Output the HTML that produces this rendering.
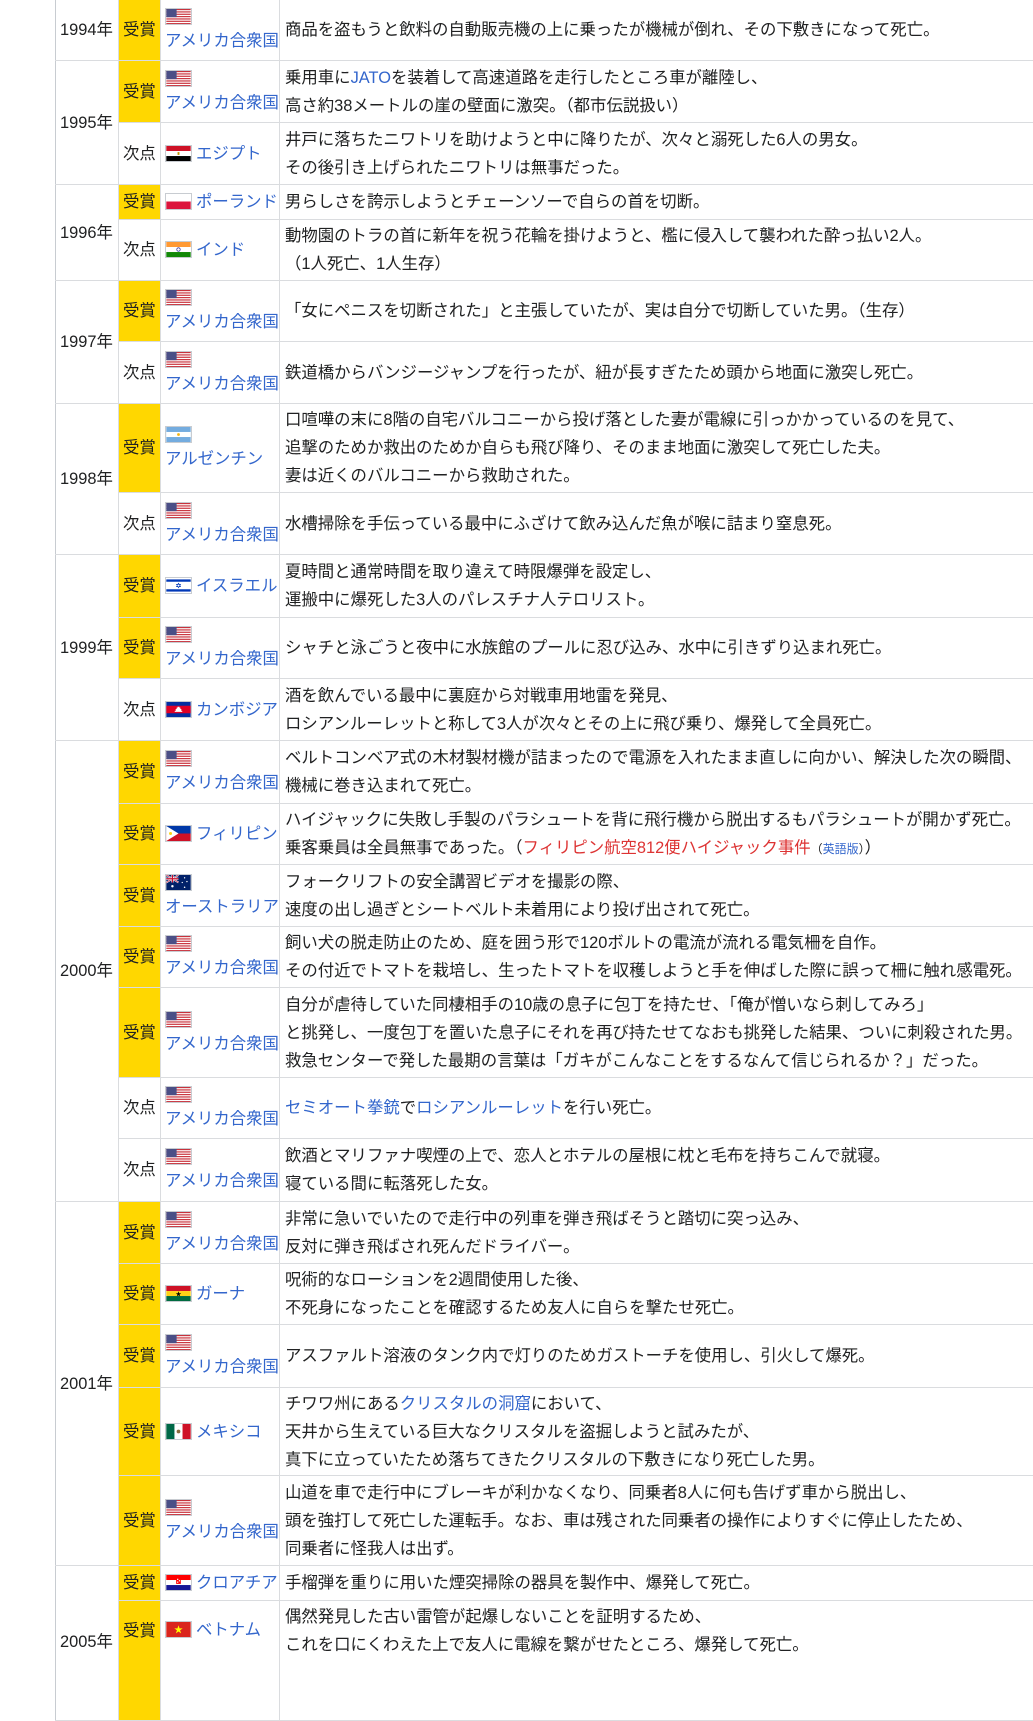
<!DOCTYPE html>
<html><head><meta charset="utf-8">
<style>
html,body{margin:0;padding:0;background:#fff;width:1033px;height:1656px;overflow:hidden}
body{font-family:"Liberation Sans","Noto Sans CJK JP",sans-serif;font-size:16.4px;color:#202122}
table{position:absolute;left:55px;top:-1px;border-collapse:collapse;table-layout:fixed;width:1100px}
td{border:1px solid #dadcdf;padding:0 4px;line-height:28px;white-space:nowrap;vertical-align:middle;overflow:visible}
td.y{width:54px;text-align:left;padding-left:4px;border-left:1px solid #c8ccd1}
td.r{width:34px;padding:0 3px 0 4px}
td.c{width:114px;padding:0 0 0 4px;line-height:26px}
td.t{padding-left:5px}
.g{background:#ffd700}
a{color:#3366cc;text-decoration:none}
a.red{color:#d33}
small{font-size:12px}
svg.f{width:27px;height:17px;vertical-align:-3px;border:1px solid #c8ccd1;box-sizing:border-box;margin-right:4px}
.blk{display:block;height:22px;line-height:22px}
</style></head><body>
<svg width="0" height="0" style="position:absolute">
<defs>
<symbol id="us" viewBox="0 0 26 16"><rect width="26" height="16" fill="#fff"/><g fill="#c8323c"><rect y="0" width="26" height="1.25"/><rect y="2.5" width="26" height="1.25"/><rect y="5" width="26" height="1.25"/><rect y="7.5" width="26" height="1.25"/><rect y="10" width="26" height="1.25"/><rect y="12.5" width="26" height="1.25"/><rect y="15" width="26" height="1"/></g><rect width="11" height="8.7" fill="#4a4f86"/></symbol>
<symbol id="eg" viewBox="0 0 26 16"><rect width="26" height="5.4" fill="#ce1126"/><rect y="5.4" width="26" height="5.3" fill="#fff"/><rect y="10.7" width="26" height="5.3" fill="#000"/><rect x="12" y="6.5" width="2" height="3" fill="#c09300"/></symbol>
<symbol id="pl" viewBox="0 0 26 16"><rect width="26" height="8" fill="#fff"/><rect y="8" width="26" height="8" fill="#dc143c"/></symbol>
<symbol id="in" viewBox="0 0 26 16"><rect width="26" height="5.4" fill="#f93"/><rect y="5.4" width="26" height="5.3" fill="#fff"/><rect y="10.7" width="26" height="5.3" fill="#128807"/><circle cx="13" cy="8" r="1.8" fill="none" stroke="#008" stroke-width=".6"/></symbol>
<symbol id="ar" viewBox="0 0 26 16"><rect width="26" height="16" fill="#74acdf"/><rect y="5.3" width="26" height="5.4" fill="#fff"/><circle cx="13" cy="8" r="1.5" fill="#f6b40e"/></symbol>
<symbol id="il" viewBox="0 0 26 16"><rect width="26" height="16" fill="#fff"/><rect y="1.5" width="26" height="2.5" fill="#0038b8"/><rect y="12" width="26" height="2.5" fill="#0038b8"/><path d="M13 5.5l2.2 3.8h-4.4zM13 10.5l-2.2-3.8h4.4z" fill="none" stroke="#0038b8" stroke-width=".6"/></symbol>
<symbol id="kh" viewBox="0 0 26 16"><rect width="26" height="16" fill="#032ea1"/><rect y="4" width="26" height="8" fill="#e00025"/><path d="M9 10.5h8v-1h-1v-2h-1v-1.5h-1v-1h-2v1h-1v1.5h-1v2h-1z" fill="#fff"/></symbol>
<symbol id="ph" viewBox="0 0 26 16"><rect width="26" height="8" fill="#0038a8"/><rect y="8" width="26" height="8" fill="#ce1126"/><path d="M0 0L13 8L0 16z" fill="#fff"/><circle cx="4.5" cy="8" r="1.6" fill="#fcd116"/></symbol>
<symbol id="au" viewBox="0 0 26 16"><rect width="26" height="16" fill="#012169"/><path d="M0 0L13 8M13 0L0 8" stroke="#fff" stroke-width="1.8"/><path d="M0 0L13 8M13 0L0 8" stroke="#c8102e" stroke-width=".7"/><path d="M6.5 0v8M0 4h13" stroke="#fff" stroke-width="2.4"/><path d="M6.5 0v8M0 4h13" stroke="#c8102e" stroke-width="1.3"/><g fill="#fff"><circle cx="6.5" cy="12" r="1.3"/><circle cx="19.5" cy="3" r=".7"/><circle cx="22" cy="7" r=".7"/><circle cx="17" cy="8" r=".7"/><circle cx="19.5" cy="13" r=".8"/></g></symbol>
<symbol id="gh" viewBox="0 0 26 16"><rect width="26" height="5.4" fill="#ce1126"/><rect y="5.4" width="26" height="5.3" fill="#fcd116"/><rect y="10.7" width="26" height="5.3" fill="#006b3f"/><path d="M13 5.6l.7 2.1h2.2l-1.8 1.3.7 2.1-1.8-1.3-1.8 1.3.7-2.1-1.8-1.3h2.2z" fill="#000"/></symbol>
<symbol id="mx" viewBox="0 0 26 16"><rect width="8.7" height="16" fill="#006847"/><rect x="8.7" width="8.6" height="16" fill="#fff"/><rect x="17.3" width="8.7" height="16" fill="#ce1126"/><circle cx="13" cy="8" r="2" fill="#8c6b3e"/></symbol>
<symbol id="hr" viewBox="0 0 26 16"><rect width="26" height="5.4" fill="#ff0000"/><rect y="5.4" width="26" height="5.3" fill="#fff"/><rect y="10.7" width="26" height="5.3" fill="#171796"/><rect x="10.5" y="3.5" width="5" height="6" fill="#f00"/><rect x="11.5" y="4" width="1.3" height="1.3" fill="#fff"/><rect x="13.4" y="5.5" width="1.3" height="1.3" fill="#fff"/><rect x="11.5" y="7" width="1.3" height="1.3" fill="#fff"/></symbol>
<symbol id="vn" viewBox="0 0 26 16"><rect width="26" height="16" fill="#da251d"/><path d="M13 3.5l1.1 3.3h3.4l-2.8 2 1.1 3.3-2.8-2-2.8 2 1.1-3.3-2.8-2h3.4z" fill="#ff0"/></symbol>
</defs></svg>

<table>
<tr style="height:61px"><td class="y">1994年</td><td class="r g">受賞</td><td class="c"><span class="blk"><svg class="f"><use href="#us"/></svg></span><a>アメリカ合衆国</a></td><td class="t">商品を盗もうと飲料の自動販売機の上に乗ったが機械が倒れ、その下敷きになって死亡。</td></tr>

<tr style="height:62px"><td class="y" rowspan="2">1995年</td><td class="r g">受賞</td><td class="c"><span class="blk"><svg class="f"><use href="#us"/></svg></span><a>アメリカ合衆国</a></td><td class="t">乗用車に<a>JATO</a>を装着して高速道路を走行したところ車が離陸し、<br>高さ約38メートルの崖の壁面に激突。（都市伝説扱い）</td></tr>
<tr style="height:62px"><td class="r">次点</td><td class="c"><svg class="f"><use href="#eg"/></svg><a>エジプト</a></td><td class="t">井戸に落ちたニワトリを助けようと中に降りたが、次々と溺死した6人の男女。<br>その後引き上げられたニワトリは無事だった。</td></tr>

<tr style="height:35px"><td class="y" rowspan="2">1996年</td><td class="r g">受賞</td><td class="c"><svg class="f"><use href="#pl"/></svg><a>ポーランド</a></td><td class="t">男らしさを誇示しようとチェーンソーで自らの首を切断。</td></tr>
<tr style="height:61px"><td class="r">次点</td><td class="c"><svg class="f"><use href="#in"/></svg><a>インド</a></td><td class="t">動物園のトラの首に新年を祝う花輪を掛けようと、檻に侵入して襲われた酔っ払い2人。<br>（1人死亡、1人生存）</td></tr>

<tr style="height:61px"><td class="y" rowspan="2">1997年</td><td class="r g">受賞</td><td class="c"><span class="blk"><svg class="f"><use href="#us"/></svg></span><a>アメリカ合衆国</a></td><td class="t">「女にペニスを切断された」と主張していたが、実は自分で切断していた男。（生存）</td></tr>
<tr style="height:62px"><td class="r">次点</td><td class="c"><span class="blk"><svg class="f"><use href="#us"/></svg></span><a>アメリカ合衆国</a></td><td class="t">鉄道橋からバンジージャンプを行ったが、紐が長すぎたため頭から地面に激突し死亡。</td></tr>

<tr style="height:89px"><td class="y" rowspan="2">1998年</td><td class="r g">受賞</td><td class="c"><span class="blk"><svg class="f"><use href="#ar"/></svg></span><a>アルゼンチン</a></td><td class="t">口喧嘩の末に8階の自宅バルコニーから投げ落とした妻が電線に引っかかっているのを見て、<br>追撃のためか救出のためか自らも飛び降り、そのまま地面に激突して死亡した夫。<br>妻は近くのバルコニーから救助された。</td></tr>
<tr style="height:62px"><td class="r">次点</td><td class="c"><span class="blk"><svg class="f"><use href="#us"/></svg></span><a>アメリカ合衆国</a></td><td class="t">水槽掃除を手伝っている最中にふざけて飲み込んだ魚が喉に詰まり窒息死。</td></tr>

<tr style="height:63px"><td class="y" rowspan="3">1999年</td><td class="r g">受賞</td><td class="c"><svg class="f"><use href="#il"/></svg><a>イスラエル</a></td><td class="t">夏時間と通常時間を取り違えて時限爆弾を設定し、<br>運搬中に爆死した3人のパレスチナ人テロリスト。</td></tr>
<tr style="height:61px"><td class="r g">受賞</td><td class="c"><span class="blk"><svg class="f"><use href="#us"/></svg></span><a>アメリカ合衆国</a></td><td class="t">シャチと泳ごうと夜中に水族館のプールに忍び込み、水中に引きずり込まれ死亡。</td></tr>
<tr style="height:62px"><td class="r">次点</td><td class="c"><svg class="f"><use href="#kh"/></svg><a>カンボジア</a></td><td class="t">酒を飲んでいる最中に裏庭から対戦車用地雷を発見、<br>ロシアンルーレットと称して3人が次々とその上に飛び乗り、爆発して全員死亡。</td></tr>

<tr style="height:63px"><td class="y" rowspan="7">2000年</td><td class="r g">受賞</td><td class="c"><span class="blk"><svg class="f"><use href="#us"/></svg></span><a>アメリカ合衆国</a></td><td class="t">ベルトコンベア式の木材製材機が詰まったので電源を入れたまま直しに向かい、解決した次の瞬間、<br>機械に巻き込まれて死亡。</td></tr>
<tr style="height:61px"><td class="r g">受賞</td><td class="c"><svg class="f"><use href="#ph"/></svg><a>フィリピン</a></td><td class="t">ハイジャックに失敗し手製のパラシュートを背に飛行機から脱出するもパラシュートが開かず死亡。<br>乗客乗員は全員無事であった。（<a class="red">フィリピン航空812便ハイジャック事件</a><small>（<a>英語版</a>）</small>）</td></tr>
<tr style="height:62px"><td class="r g">受賞</td><td class="c"><span class="blk"><svg class="f"><use href="#au"/></svg></span><a>オーストラリア</a></td><td class="t">フォークリフトの安全講習ビデオを撮影の際、<br>速度の出し過ぎとシートベルト未着用により投げ出されて死亡。</td></tr>
<tr style="height:61px"><td class="r g">受賞</td><td class="c"><span class="blk"><svg class="f"><use href="#us"/></svg></span><a>アメリカ合衆国</a></td><td class="t">飼い犬の脱走防止のため、庭を囲う形で120ボルトの電流が流れる電気柵を自作。<br>その付近でトマトを栽培し、生ったトマトを収穫しようと手を伸ばした際に誤って柵に触れ感電死。</td></tr>
<tr style="height:90px"><td class="r g">受賞</td><td class="c"><span class="blk"><svg class="f"><use href="#us"/></svg></span><a>アメリカ合衆国</a></td><td class="t">自分が虐待していた同棲相手の10歳の息子に包丁を持たせ、「俺が憎いなら刺してみろ」<br>と挑発し、一度包丁を置いた息子にそれを再び持たせてなおも挑発した結果、ついに刺殺された男。<br>救急センターで発した最期の言葉は「ガキがこんなことをするなんて信じられるか？」だった。</td></tr>
<tr style="height:61px"><td class="r">次点</td><td class="c"><span class="blk"><svg class="f"><use href="#us"/></svg></span><a>アメリカ合衆国</a></td><td class="t"><a>セミオート拳銃</a>で<a>ロシアンルーレット</a>を行い死亡。</td></tr>
<tr style="height:63px"><td class="r">次点</td><td class="c"><span class="blk"><svg class="f"><use href="#us"/></svg></span><a>アメリカ合衆国</a></td><td class="t">飲酒とマリファナ喫煙の上で、恋人とホテルの屋根に枕と毛布を持ちこんで就寝。<br>寝ている間に転落死した女。</td></tr>

<tr style="height:62px"><td class="y" rowspan="5">2001年</td><td class="r g">受賞</td><td class="c"><span class="blk"><svg class="f"><use href="#us"/></svg></span><a>アメリカ合衆国</a></td><td class="t">非常に急いでいたので走行中の列車を弾き飛ばそうと踏切に突っ込み、<br>反対に弾き飛ばされ死んだドライバー。</td></tr>
<tr style="height:61px"><td class="r g">受賞</td><td class="c"><svg class="f"><use href="#gh"/></svg><a>ガーナ</a></td><td class="t">呪術的なローションを2週間使用した後、<br>不死身になったことを確認するため友人に自らを撃たせ死亡。</td></tr>
<tr style="height:63px"><td class="r g">受賞</td><td class="c"><span class="blk"><svg class="f"><use href="#us"/></svg></span><a>アメリカ合衆国</a></td><td class="t">アスファルト溶液のタンク内で灯りのためガストーチを使用し、引火して爆死。</td></tr>
<tr style="height:88px"><td class="r g">受賞</td><td class="c"><svg class="f"><use href="#mx"/></svg><a>メキシコ</a></td><td class="t">チワワ州にある<a>クリスタルの洞窟</a>において、<br>天井から生えている巨大なクリスタルを盗掘しようと試みたが、<br>真下に立っていたため落ちてきたクリスタルの下敷きになり死亡した男。</td></tr>
<tr style="height:90px"><td class="r g">受賞</td><td class="c"><span class="blk"><svg class="f"><use href="#us"/></svg></span><a>アメリカ合衆国</a></td><td class="t">山道を車で走行中にブレーキが利かなくなり、同乗者8人に何も告げず車から脱出し、<br>頭を強打して死亡した運転手。なお、車は残された同乗者の操作によりすぐに停止したため、<br>同乗者に怪我人は出ず。</td></tr>

<tr style="height:35px"><td class="y" rowspan="2" style="vertical-align:top;padding-top:62px">2005年</td><td class="r g">受賞</td><td class="c"><svg class="f"><use href="#hr"/></svg><a>クロアチア</a></td><td class="t">手榴弾を重りに用いた煙突掃除の器具を製作中、爆発して死亡。</td></tr>
<tr style="height:120px"><td class="r g" style="vertical-align:top;padding-top:16px">受賞</td><td class="c" style="vertical-align:top;padding-top:16px"><svg class="f"><use href="#vn"/></svg><a>ベトナム</a></td><td class="t" style="vertical-align:top;padding-top:2px">偶然発見した古い雷管が起爆しないことを証明するため、<br>これを口にくわえた上で友人に電線を繋がせたところ、爆発して死亡。</td></tr>
</table>
</body></html>
